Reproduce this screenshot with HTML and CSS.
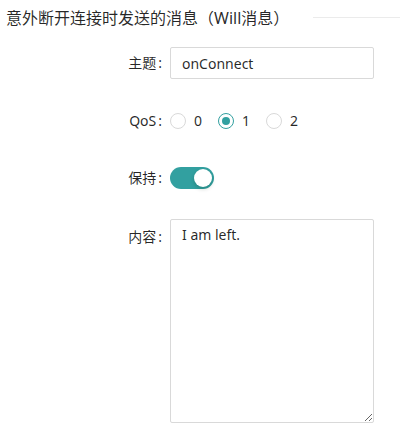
FILE: index.html
```html
<!DOCTYPE html>
<html lang="zh-CN">
<head>
<meta charset="utf-8">
<link rel="stylesheet" href="styles.css">
</head>
<body>
<div class="divider">
  <span class="divider-text">意外断开连接时发送的消息（Will消息）</span>
  <span class="divider-line"></span>
</div>
<form class="form">
  <div class="item item-topic">
    <label class="label">主题</label>
    <div class="control"><input class="input" type="text" value="onConnect"></div>
  </div>
  <div class="item item-qos">
    <label class="label">QoS</label>
    <div class="control radios">
      <span class="radio-wrap"><span class="radio"></span><span class="radio-text">0</span></span>
      <span class="radio-wrap"><span class="radio checked"></span><span class="radio-text">1</span></span>
      <span class="radio-wrap"><span class="radio"></span><span class="radio-text">2</span></span>
    </div>
  </div>
  <div class="item item-keep">
    <label class="label">保持</label>
    <div class="control"><span class="switch"><span class="knob"></span></span></div>
  </div>
  <div class="item item-content">
    <label class="label label-top">内容</label>
    <div class="control"><textarea class="textarea">I am left.</textarea></div>
  </div>
</form>
</body>
</html>
```
FILE: styles.css
```css
html, body {
  margin: 0;
  padding: 0;
  background: #ffffff;
}
body {
  width: 400px;
  height: 428px;
  overflow: hidden;
  font-family: "Noto Sans", "Noto Sans CJK SC", sans-serif;
  font-size: 14px;
  color: rgba(0, 0, 0, 0.85);
}
.divider {
  display: flex;
  align-items: center;
  height: 24px;
  margin-top: 6px;
  padding-left: 6px;
}
.divider-text {
  font-size: 16px;
  font-family: "Noto Sans", "Noto Sans CJK SC", sans-serif;
  white-space: nowrap;
  line-height: 24px;
}
.divider-line {
  flex: 1;
  height: 0;
  border-top: 1px solid #ebebeb;
  margin-left: 24px;
  margin-top: -2px;
}
.form {
  margin: 17px 0 0 0;
  padding-right: 26px;
}
.item {
  display: flex;
  align-items: center;
}
.item-qos {
  margin-top: 26px;
}
.item-keep {
  margin-top: 25px;
}
.item-content {
  margin-top: 25px;
  align-items: flex-start;
}
.label {
  width: 170px;
  text-align: right;
  line-height: 32px;
  height: 32px;
  flex: none;
  white-space: nowrap;
}
.label::after {
  content: ":";
  margin: 0 8px 0 2px;
}
.label-top {
  margin-top: 2px;
}
.control {
  flex: 1;
  display: flex;
  align-items: center;
  min-height: 32px;
}
.input {
  box-sizing: border-box;
  width: 100%;
  height: 32px;
  padding: 4px 11px;
  border: 1px solid #d9d9d9;
  border-radius: 2px;
  font-family: inherit;
  font-size: 14px;
  color: rgba(0, 0, 0, 0.85);
  outline: none;
  background: #fff;
}
.radios {
  display: flex;
}
.radio-wrap {
  display: inline-flex;
  align-items: center;
  margin-right: 8px;
}
.radio {
  box-sizing: border-box;
  width: 16px;
  height: 16px;
  border: 1px solid #d9d9d9;
  border-radius: 50%;
  background: #fff;
  position: relative;
}
.radio.checked {
  border-color: #32a0a0;
}
.radio.checked::after {
  content: "";
  position: absolute;
  left: 3px;
  top: 3px;
  width: 8px;
  height: 8px;
  border-radius: 50%;
  background: #32a0a0;
}
.radio-text {
  padding: 0 8px;
  line-height: 22px;
}
.switch {
  display: inline-block;
  position: relative;
  width: 44px;
  height: 22px;
  border-radius: 11px;
  background: #32a0a0;
}
.knob {
  position: absolute;
  top: 2px;
  left: 24px;
  width: 18px;
  height: 18px;
  border-radius: 50%;
  background: #fff;
  box-shadow: 0 2px 4px rgba(0, 35, 11, 0.2);
}
.textarea {
  box-sizing: border-box;
  width: 100%;
  height: 204px;
  padding: 4px 11px;
  border: 1px solid #d9d9d9;
  border-radius: 2px;
  font-family: inherit;
  font-size: 14px;
  line-height: 22px;
  color: rgba(0, 0, 0, 0.85);
  resize: vertical;
  outline: none;
  display: block;
}
```
